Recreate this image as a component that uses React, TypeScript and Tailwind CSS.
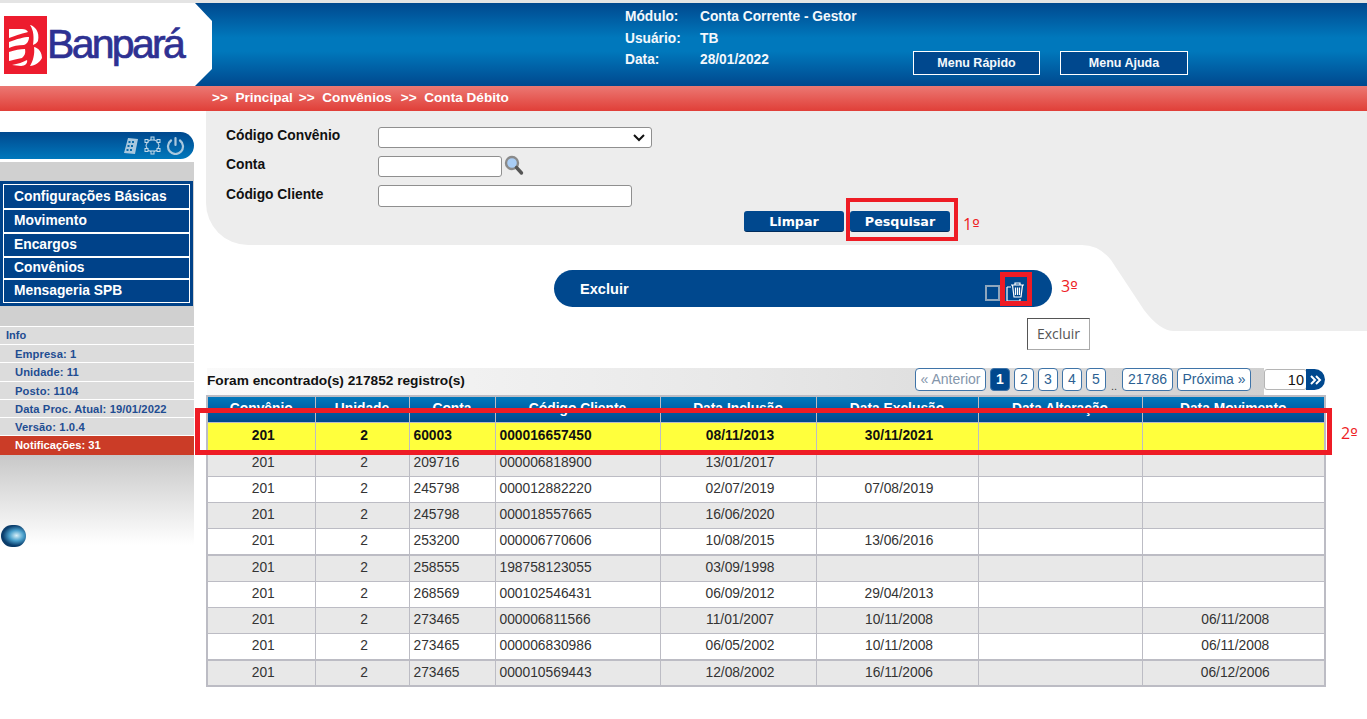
import React from "react";

const rows = [
  ["201", "2", "209716", "000006818900", "13/01/2017", "", "", ""],
  ["201", "2", "245798", "000012882220", "02/07/2019", "07/08/2019", "", ""],
  ["201", "2", "245798", "000018557665", "16/06/2020", "", "", ""],
  ["201", "2", "253200", "000006770606", "10/08/2015", "13/06/2016", "", ""],
  ["201", "2", "258555", "198758123055", "03/09/1998", "", "", ""],
  ["201", "2", "268569", "000102546431", "06/09/2012", "29/04/2013", "", ""],
  ["201", "2", "273465", "000006811566", "11/01/2007", "10/11/2008", "", "06/11/2008"],
  ["201", "2", "273465", "000006830986", "06/05/2002", "10/11/2008", "", "06/11/2008"],
  ["201", "2", "273465", "000010569443", "12/08/2002", "16/11/2006", "", "06/12/2006"],
];
const rowHeights = ["h-[26px]", "h-[26px]", "h-[26px]", "h-[27px]", "h-[26px]", "h-[26px]", "h-[26px]", "h-[27px]", "h-[26px]"];
const heads = ["Convênio", "Unidade", "Conta", "Código Cliente", "Data Inclusão", "Data Exclusão", "Data Alteração", "Data Movimento"];
const widths = [108, 94, 86, 165, 156, 162, 164, 183];
const highlighted = ["201", "2", "60003", "000016657450", "08/11/2013", "30/11/2021", "", ""];
const menu = [
  ["Configurações Básicas", "h-[23px] pt-[1px]"],
  ["Movimento", "h-[24px] border-t-2 border-white"],
  ["Encargos", "h-[24px] border-t-2 border-white"],
  ["Convênios", "h-[22px] pt-[1px] border-t-2 border-white"],
  ["Mensageria SPB", "h-[24px] pt-[1px] border-t-2 border-white"],
];
const info = [
  ["Empresa: 1", "h-[18px]"],
  ["Unidade: 11", "h-[19px]"],
  ["Posto: 1104", "h-[18px]"],
  ["Data Proc. Atual: 19/01/2022", "h-[18px]"],
  ["Versão: 1.0.4", "h-[18px]"],
];
const pages = ["2", "3", "4", "5"];

function PageBtn({ children, className }: { children: React.ReactNode; className?: string }) {
  return (
    <span className={"h-[23px] flex items-center justify-center rounded-[4px] border border-[#3f74a8] bg-white pb-[1px] text-[14px] leading-none text-[#2c5f92] " + (className || "")}>
      {children}
    </span>
  );
}

function Ordinal({ n }: { n: string }) {
  return (
    <>
      {n}
      <span className="font-['DejaVu_Sans',sans-serif] text-[16px]">º</span>
    </>
  );
}

function cellAlign(i: number) {
  return i === 2 || i === 3 ? "text-left pl-[4px]" : "text-center pl-[4px]";
}

export default function App() {
  return (
    <div className="relative w-[1367px] h-[719px] overflow-hidden bg-white font-['Liberation_Sans',Arial,sans-serif]">
      {/* top strip */}
      <div className="h-[3px] bg-[#e4e4e4]" />

      {/* header */}
      <header className="relative h-[83px] flex bg-[linear-gradient(180deg,#00488e_0%,#0078bc_42%,#0078bc_58%,#00488e_100%)]">
        <div className="w-[212px] h-full bg-white [clip-path:polygon(0_0,195px_0,212px_18px,212px_66px,195px_83px,0_83px)] flex items-center pl-[4px]">
          <svg width="44" height="58" viewBox="0 0 44 58" className="shrink-0">
            <rect width="43" height="58" fill="#ed1c2e" />
            <path d="M5 13 H18 C21 13 23 14 24 16 C20 17 13 19 5 22 Z" fill="#fff" />
            <path d="M5 26 C13 23 20 21 25 21 C25 25 23 28 20 29 C14 29 9 30 5 32 Z" fill="#fff" />
            <path d="M5 36 C11 34 16 33 21 33 C22 38 20 40 18 42 C13 43 9 44 5 45 Z" fill="#fff" />
            <path d="M26 9 C31 10 36 16 34 25 C33 27 31 28 29 29 C30 22 30 15 26 9 Z" fill="#fff" />
            <path d="M30 31 C35 32 38 37 38 42 C36 46 31 50 26 50 C29 45 31 38 30 31 Z" fill="#fff" />
            <path d="M8 49 C14 48 19 46 23 44 C24 47 21 50 17 50 Z" fill="#fff" />
          </svg>
          <span className="-ml-[1px] -mt-[1px] text-[41px] leading-none tracking-[-2.7px] text-[#2e3192] [-webkit-text-stroke:0.7px_#2e3192]">Banpará</span>
        </div>

        <div className="ml-[413px] pt-[3px] text-[13.75px] font-bold text-[#f4f8fc] leading-[15px]">
          <div className="flex h-[21px] items-center"><span className="w-[75px]">Módulo:</span><span>Conta Corrente - Gestor</span></div>
          <div className="flex h-[22px] items-center"><span className="w-[75px]">Usuário:</span><span>TB</span></div>
          <div className="flex h-[21px] items-center"><span className="w-[75px]">Data:</span><span>28/01/2022</span></div>
        </div>

        <div className="absolute left-[913px] top-[48px] flex gap-[20px]">
          <button className="w-[127px] h-[24px] border border-white bg-[#00488e] text-[12.5px] font-bold text-[#f4f8fc]">Menu Rápido</button>
          <button className="w-[128px] h-[24px] border border-white bg-[#00488e] text-[12.5px] font-bold text-[#f4f8fc]">Menu Ajuda</button>
        </div>
      </header>

      {/* breadcrumb */}
      <div className="h-[25px] pl-[212px] flex items-center gap-[6px] bg-[linear-gradient(180deg,#ec7873_0%,#e03f38_100%)] text-[13.6px] font-bold text-white whitespace-pre">
        <span>&gt;&gt;  Principal</span>
        <span>&gt;&gt;  Convênios</span>
        <span className="ml-[3px]">&gt;&gt;  Conta Débito</span>
      </div>

      <div className="flex">
        {/* sidebar */}
        <aside className="w-[195px] shrink-0 pt-[21px]">
          <div className="w-[194px] h-[27px] rounded-r-[14px] bg-[linear-gradient(180deg,#00488e_0%,#0078bc_100%)] flex items-center justify-end gap-[4px] pr-[9px]">
            <svg width="16" height="18" viewBox="0 0 16 18" fill="#a9c8de">
              <path d="M5 1 L15 2 L12 17 L1 16 Z" />
              <g fill="#0a69a8">
                <rect x="5.5" y="4" width="2" height="2" /><rect x="9" y="4" width="2" height="2" />
                <rect x="4.5" y="8" width="2" height="2" /><rect x="8" y="8" width="2" height="2" />
                <rect x="3.5" y="12" width="2" height="2" /><rect x="7" y="12" width="2" height="2" />
              </g>
            </svg>
            <svg width="19" height="19" viewBox="0 0 19 19" fill="none" stroke="#a9c8de" strokeWidth="1.2">
              <path d="M9.5 3 L14.5 5.5 L16 9.5 L14.5 14 L9.5 16 L4.5 14 L3 9.5 L4.5 5.5 Z" />
              <g fill="#0a69a8" stroke="#c2d9ea" strokeWidth="1">
                <rect x="8" y="1" width="3" height="3" />
                <rect x="14" y="3.5" width="3" height="3" />
                <rect x="14" y="12.5" width="3" height="3" />
                <rect x="8" y="15" width="3" height="3" />
                <rect x="2" y="12.5" width="3" height="3" />
                <rect x="2" y="3.5" width="3" height="3" />
              </g>
            </svg>
            <svg width="19" height="19" viewBox="0 0 19 19" fill="none" stroke="#a9c8de" strokeWidth="2.2" strokeLinecap="round">
              <path d="M9.5 2 V9" />
              <path d="M5 4.5 A7.5 7.5 0 1 0 14 4.5" />
            </svg>
          </div>

          <div className="mt-[3px] w-[194px] h-[164px] bg-[#d0d0d0] pt-[19px]">
            <nav className="w-[193px] h-[125px] bg-[#004289] px-[3px] py-[3px]">
              <div className="h-[119px] border border-white flex flex-col">
                {menu.map(([m, h]) => (
                  <div key={m} className={h + " flex items-center pl-[10px] text-[13.8px] font-bold text-white"}>{m}</div>
                ))}
              </div>
            </nav>
          </div>

          <div className="w-[194px] border-t border-white">
            <div className="h-[18px] flex items-center pl-[6px] text-[11px] font-bold text-[#1f4d92] bg-[#dcdcdc] border-b border-white">Info</div>
            {info.map(([t, h]) => (
              <div key={t} className={h + " flex items-center pl-[15px] pt-[1px] text-[11.2px] tracking-[0.1px] font-bold text-[#1f4d92] bg-[#dcdcdc] border-b border-white"}>{t}</div>
            ))}
            <div className="h-[19px] flex items-center pl-[15px] text-[11.2px] font-bold text-white bg-[#cb3c27]">Notificações: 31</div>
            <div className="h-[90px] bg-[linear-gradient(180deg,#c8c8c8_0%,#ffffff_100%)] pl-[1px] pt-[70px]">
              <div className="w-[25px] h-[22px] rounded-full bg-[radial-gradient(ellipse_at_62%_48%,#d8f0f8_0%,#4aa0cc_32%,#0b3f6e_62%,#062c52_100%)]" />
            </div>
          </div>
        </aside>

        {/* main */}
        <main className="relative flex-1">
          <svg className="absolute left-[887px] top-[134px]" width="285" height="86" viewBox="0 0 285 86" fill="#ededed">
            <path d="M0 0 Q17 0 29 15 L62 65 Q78 86 92 86 L285 86 L285 0 Z" />
          </svg>

          {/* form */}
          <section className="relative ml-[11px] h-[134px] bg-[#ededed] rounded-bl-[42px] pl-[20px] pt-[16px] text-[13.8px] font-bold text-[#111]">
            <div className="flex h-[21px] items-start">
              <label className="w-[152px] pt-[1px] leading-[16px]">Código Convênio</label>
              <div className="relative w-[274px] h-[21px] rounded-[3px] border border-[#8f8f8f] bg-white">
                <svg className="absolute right-[6px] top-[6px]" width="12" height="8" viewBox="0 0 12 8" fill="none" stroke="#111" strokeWidth="2"><path d="M1 1 L6 6 L11 1" /></svg>
              </div>
            </div>
            <div className="flex h-[21px] mt-[8px] items-start">
              <label className="w-[152px] pt-[1px] leading-[16px]">Conta</label>
              <div className="w-[124px] h-[21px] rounded-[3px] border border-[#8f8f8f] bg-white" />
              <svg className="ml-[2px] -mt-[1px]" width="20" height="21" viewBox="0 0 20 21">
                <circle cx="8" cy="8" r="6" fill="#a9cdf5" stroke="#8a8a8a" strokeWidth="2.4" />
                <path d="M12.5 12.5 L17.5 18" stroke="#555" strokeWidth="3.4" strokeLinecap="round" />
              </svg>
            </div>
            <div className="flex h-[22px] mt-[8px] items-start">
              <label className="w-[152px] pt-[2px] leading-[16px]">Código Cliente</label>
              <div className="w-[254px] h-[22px] rounded-[3px] border border-[#8f8f8f] bg-white" />
            </div>
            <div className="flex gap-[6px] mt-[4px] ml-[518px]">
              <button className="w-[100px] h-[21px] pt-[1px] rounded-[3px] bg-[#00488e] border-b border-[#002c5c] text-[12.7px] font-bold text-white font-['DejaVu_Sans',sans-serif]">Limpar</button>
              <button className="w-[100px] h-[21px] pt-[1px] rounded-[3px] bg-[#00488e] border-b border-[#002c5c] text-[12.7px] font-bold text-white font-['DejaVu_Sans',sans-serif]">Pesquisar</button>
            </div>
          </section>

          {/* excluir bar */}
          <div className="relative ml-[359px] mt-[25px] w-[498px] h-[37px] pt-[2px] rounded-[19px] bg-[#00488e] flex items-center pl-[26px] text-[14.6px] font-bold text-white">
            Excluir
            <span className="absolute left-[431px] top-[15px] w-[15px] h-[16px] border-2 border-[#8ea6bd]" />
            <svg className="absolute left-[452px] top-[11px]" width="20" height="21" viewBox="0 0 20 21" fill="none" stroke="#fff" strokeWidth="1.2">
              <path d="M1 6 H5 M1 6 V20 H14 V18" />
              <path d="M5 4 H18 M9 4 V2 H14 V4 M6.5 4 L8 16 H15 L16.5 4 M9.5 6.5 V14 M11.5 6.5 V14 M13.5 6.5 V14" />
            </svg>
          </div>

          {/* tooltip */}
          <div className="relative ml-[832px] mt-[11px] w-[63px] h-[32px] pb-[2px] flex items-center justify-center border border-[#555] border-r-[#aaa] border-b-[#aaa] bg-white text-[14px] text-[#555] font-['Open_Sans',sans-serif]">Excluir</div>

          {/* results toolbar */}
          <div className="relative ml-[12px] mt-[18px] w-[1119px] flex items-start">
            <div className="w-[1057px] h-[27px] flex items-start justify-between pr-[13px] bg-[linear-gradient(90deg,#fafafa_0%,#e8e8e8_50%,#d0d0d0_100%)]">
              <span className="text-[13.7px] font-bold text-[#111] pt-[3px]">Foram encontrado(s) 217852 registro(s)</span>
              <div className="flex gap-[4px] items-start">
                <PageBtn className="w-[71px] !text-[#8496ab]">« Anterior</PageBtn>
                <PageBtn className="w-[20px] !bg-[#00488e] !text-white font-bold">1</PageBtn>
                {pages.map((p) => <PageBtn key={p} className="w-[20px]">{p}</PageBtn>)}
                <span className="w-[8px] h-[23px] flex items-end justify-center text-[11px] leading-[10px] text-[#444]">..</span>
                <PageBtn className="w-[51px]">21786</PageBtn>
                <PageBtn className="w-[74px]">Próxima »</PageBtn>
              </div>
            </div>
            <div className="flex items-start">
              <div className="w-[43px] h-[21px] mt-[1px] rounded-[3px] border border-[#b5b5b5] bg-white text-right pr-[2px] text-[14.5px] leading-[20px] text-[#111]">10</div>
              <span className="w-[19px] h-[21px] mt-[1px] -ml-[1px] rounded-r-full rounded-l-[3px] bg-[#00488e] flex items-center justify-center">
                <svg width="12" height="10" viewBox="0 0 12 10" fill="none" stroke="#fff" strokeWidth="2"><path d="M1 1 L5 5 L1 9 M6 1 L10 5 L6 9" /></svg>
              </span>
            </div>
          </div>

          {/* table */}
          <table className="relative ml-[11px] w-[1118px] table-fixed border-collapse border-2 border-[#bcbcc4] text-[13.8px]">
            <colgroup>{widths.map((w, i) => <col key={i} style={{ width: w }} />)}</colgroup>
            <thead>
              <tr className="h-[26px]">
                {heads.map((h) => (
                  <th key={h} className="border border-[#bcbcc4] bg-[linear-gradient(180deg,#0078bc_0%,#00488e_100%)] text-[13.8px] font-bold text-white p-0">{h}</th>
                ))}
              </tr>
            </thead>
            <tbody>
              <tr className="h-[28px] bg-[#ffff3c]">
                {highlighted.map((c, i) => <td key={i} className={"border border-[#bcbcc4] font-bold text-[#111] p-0 " + cellAlign(i)}>{c}</td>)}
              </tr>
              {rows.map((r, n) => (
                <tr key={n} className={rowHeights[n] + " " + (n % 2 === 0 ? "bg-[#e8e8e8]" : "bg-white")}>
                  {r.map((c, i) => <td key={i} className={"border border-[#bcbcc4] text-[#333] p-0 " + cellAlign(i) + (n === 4 || n === 8 ? " border-t-2" : "")}>{c}</td>)}
                </tr>
              ))}
            </tbody>
          </table>
        </main>
      </div>

      {/* tutorial annotations */}
      <div className="absolute left-[846px] top-[198px] w-[112px] h-[43px] border-[4px] border-[#ee1c25]" />
      <span className="absolute left-[963px] top-[214px] text-[16px] leading-[20px] text-[#ee1c25] font-['Open_Sans',sans-serif]"><Ordinal n="1" /></span>
      <div className="absolute left-[1000px] top-[272px] w-[32px] h-[34px] border-[5px] border-[#ee1c25]" />
      <span className="absolute left-[1061px] top-[276px] text-[16px] leading-[20px] text-[#ee1c25] font-['Open_Sans',sans-serif]"><Ordinal n="3" /></span>
      <div className="absolute left-[195px] top-[408px] w-[1137px] h-[47px] border-[5px] border-[#ee1c25]" />
      <span className="absolute left-[1341px] top-[423px] text-[16px] leading-[20px] text-[#ee1c25] font-['Open_Sans',sans-serif]"><Ordinal n="2" /></span>
    </div>
  );
}
